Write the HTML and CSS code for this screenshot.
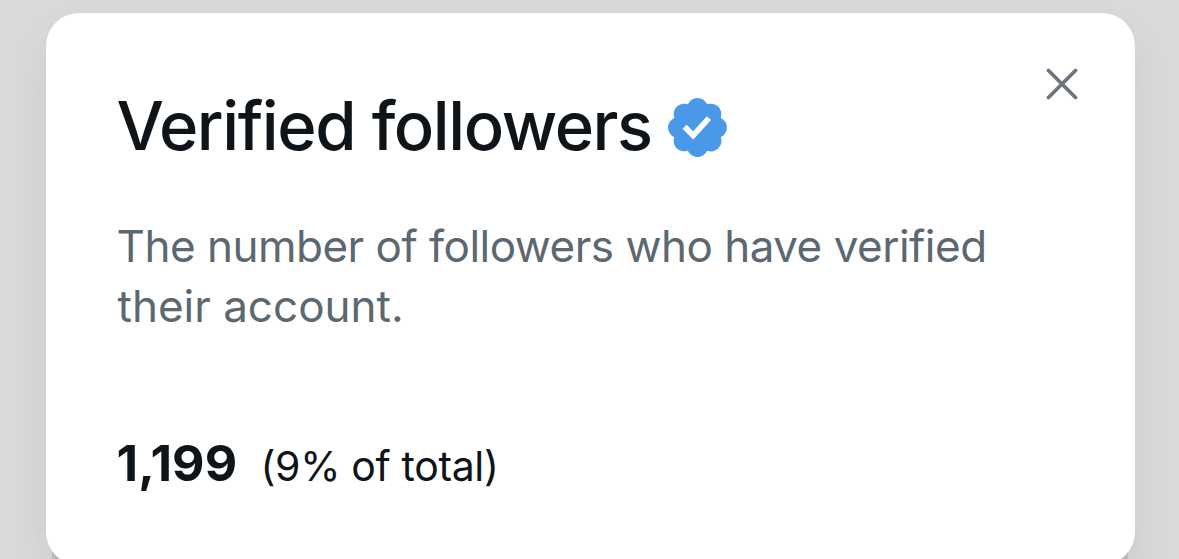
FILE: index.html
```
<!DOCTYPE html>
<html lang="en">
<head>
<meta charset="utf-8">
<title>Verified followers</title>
<link rel="stylesheet" href="styles.css">
</head>
<body>
<main class="card">
  <div class="content">
    <h1 class="title"><span class="title-text">Verified followers</span>
      <svg class="badge" viewBox="0 0 22 22" aria-hidden="true"><path fill="#4a99e9" d="M20.396 11c-.018-.646-.215-1.275-.57-1.816-.354-.54-.852-.972-1.438-1.246.223-.607.27-1.264.14-1.897-.131-.634-.437-1.218-.882-1.687-.47-.445-1.053-.75-1.687-.882-.633-.13-1.29-.083-1.897.14-.273-.587-.704-1.086-1.245-1.44S11.647 1.62 11 1.604c-.646.017-1.273.213-1.813.568s-.969.854-1.24 1.44c-.608-.223-1.267-.272-1.902-.14-.635.13-1.22.436-1.69.882-.445.47-.749 1.055-.878 1.688-.13.633-.08 1.29.144 1.896-.587.274-1.087.705-1.443 1.245-.356.54-.555 1.17-.574 1.817.02.647.218 1.276.574 1.817.356.54.856.972 1.443 1.245-.224.606-.274 1.263-.144 1.896.13.634.433 1.218.877 1.688.47.443 1.054.747 1.687.878.633.132 1.29.084 1.897-.136.274.586.705 1.084 1.246 1.439.54.354 1.17.551 1.816.569.647-.016 1.276-.213 1.817-.567s.972-.854 1.245-1.44c.604.239 1.266.296 1.903.164.636-.132 1.22-.447 1.68-.907.46-.46.776-1.044.908-1.681s.075-1.299-.165-1.903c.586-.274 1.084-.705 1.439-1.246.354-.54.551-1.17.569-1.816z"/><path fill="#fff" d="M9.662 14.85l-3.429-3.428 1.293-1.302 2.072 2.072 4.4-4.794 1.347 1.246z"/></svg>
    </h1>
    <p class="description"><span class="line-one">The number of followers who have verified</span><br><span class="line-two">their account.</span></p>
    <p class="stat"><strong class="count">1,199</strong><span class="share">(9% of total)</span></p>
  </div>
  <button class="close" aria-label="Close"><svg viewBox="0 0 32 32"><path d="M2.5 2.5l27 27M29.5 2.5l-27 27"/></svg></button>
</main>
</body>
</html>
```
FILE: styles.css
```
* { box-sizing: border-box; }
body {
  margin: 0;
  height: 559px;
  overflow: hidden;
  padding: 13px 45.5px 0;
  background: #d9d9db;
  font-family: Inter, "Liberation Sans", sans-serif;
  color: #0f1419;
}
.card {
  position: relative;
  display: flex;
  justify-content: space-between;
  align-items: flex-start;
  width: 1089px;
  height: 552px;
  padding: 74px 57px 0 73px;
  border-radius: 33px;
  background: #fff;
  box-shadow: 0 20px 40px rgba(0, 0, 0, .06), 0 3px 6px rgba(0, 0, 0, .015);
}
/* Dark edge of the layer under the card, seen at its bottom corners */
.card::before {
  content: "";
  position: absolute;
  z-index: -1;
  left: 6px;
  right: 7px;
  bottom: 0;
  height: 16px;
  background: #bfc0c1;
}
.content { flex: none; width: 900px; }
.title {
  display: flex;
  align-items: center;
  height: 80px;
  margin: 0;
  font-size: 67px;
  line-height: 78px;
  font-weight: 550;
  letter-spacing: -1.43px;
  white-space: nowrap;
}
.title-text { width: 546px; height: 80px; margin-left: -2px; }
.badge { flex: none; width: 69px; height: 69px; }
.description {
  margin: 49px 0 0;
  font-size: 44px;
  line-height: 60px;
  letter-spacing: -.5px;
  color: #5b6872;
  white-space: nowrap;
}
.line-one { margin-left: -2px; }
.line-two { margin-left: -1px; letter-spacing: 0; }
.stat {
  display: flex;
  align-items: baseline;
  margin: 97px 0 0 -2px;
  line-height: 60px;
  white-space: nowrap;
}
.count { width: 144px; font-size: 50px; font-weight: 700; letter-spacing: .1px; }
.share { font-size: 41px; letter-spacing: -.35px; }
.close {
  flex: none;
  width: 32px;
  height: 32px;
  margin: -19px 0 0;
  padding: 0;
  border: 0;
  background: none;
}
.close svg { display: block; width: 32px; height: 32px; fill: none; stroke: #6e7780; stroke-width: 3.8; stroke-linecap: round; }
```
